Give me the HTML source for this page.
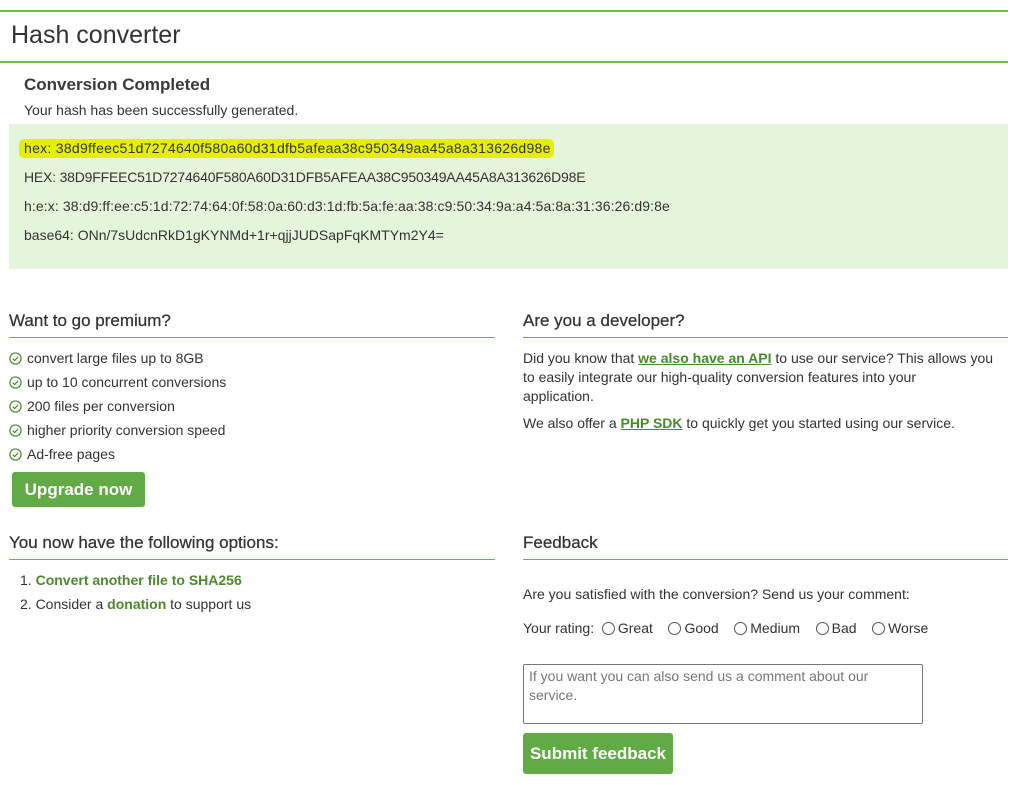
<!DOCTYPE html>
<html><head><meta charset="utf-8"><style>
*{margin:0;padding:0;box-sizing:border-box}
body{width:1017px;height:785px;background:#fff;font-family:"Liberation Sans",Arial,sans-serif;color:#333;font-size:14px;position:relative;overflow:hidden}
.a{position:absolute;white-space:nowrap}
.hr{position:absolute;height:1px;background:#6cb24a}
.h3{font-size:17px;color:#333;-webkit-text-stroke:0.25px #333}
a{color:#4b8a2b;font-weight:bold;text-decoration:none}
a.u{text-decoration:underline}
.btn{position:absolute;background:#60ab45;color:#fff;font-weight:bold;font-size:17px;border-radius:3px;text-align:center}
.chk{display:inline-block;width:13px;height:13px;vertical-align:-2px;margin-right:5px}
.rad{display:inline-block;width:13px;height:13px;border:1px solid #555;border-radius:50%;vertical-align:-2px;margin-right:3px}
</style></head><body>
<div class="hr" style="left:0;top:10px;width:1008px;height:2px;background:#6cbe45"></div>
<div class="a" style="left:11px;top:21px;font-size:25px;color:#333">Hash converter</div>
<div class="hr" style="left:0;top:61px;width:1008px;height:2px;background:#6cbe45"></div>
<div class="a h3" style="left:24px;top:75px;font-weight:bold;color:#3a3a3a;-webkit-text-stroke:0">Conversion Completed</div>
<div class="a" style="left:24px;top:102px">Your hash has been successfully generated.</div>
<div class="a" style="left:9px;top:124px;width:999px;height:145px;background:#e4f5dc"></div>
<div class="a" style="left:19px;top:139px;width:535px;height:19px;background:#e6ef00;border-radius:5px"></div>
<div class="a" style="left:24px;top:140px;letter-spacing:0.28px">hex: 38d9ffeec51d7274640f580a60d31dfb5afeaa38c950349aa45a8a313626d98e</div>
<div class="a" style="left:24px;top:169px;letter-spacing:-0.2px">HEX: 38D9FFEEC51D7274640F580A60D31DFB5AFEAA38C950349AA45A8A313626D98E</div>
<div class="a" style="left:24px;top:198px;letter-spacing:0.1px">h:e:x: 38:d9:ff:ee:c5:1d:72:74:64:0f:58:0a:60:d3:1d:fb:5a:fe:aa:38:c9:50:34:9a:a4:5a:8a:31:36:26:d9:8e</div>
<div class="a" style="left:24px;top:227px">base64: ONn/7sUdcnRkD1gKYNMd+1r+qjjJUDSapFqKMTYm2Y4=</div>

<div class="a h3" style="left:9px;top:311px">Want to go premium?</div>
<div class="hr" style="left:9px;top:337px;width:486px"></div>
<div class="a" style="left:9px;top:346px;line-height:24px">
<div><svg class="chk" viewBox="0 0 14 14"><circle cx="7" cy="7" r="6" fill="none" stroke="#4b8a2b" stroke-width="1.3"/><path d="M4 7.2l2 2 4-4" fill="none" stroke="#4b8a2b" stroke-width="1.3"/></svg>convert large files up to 8GB</div>
<div><svg class="chk" viewBox="0 0 14 14"><circle cx="7" cy="7" r="6" fill="none" stroke="#4b8a2b" stroke-width="1.3"/><path d="M4 7.2l2 2 4-4" fill="none" stroke="#4b8a2b" stroke-width="1.3"/></svg>up to 10 concurrent conversions</div>
<div><svg class="chk" viewBox="0 0 14 14"><circle cx="7" cy="7" r="6" fill="none" stroke="#4b8a2b" stroke-width="1.3"/><path d="M4 7.2l2 2 4-4" fill="none" stroke="#4b8a2b" stroke-width="1.3"/></svg>200 files per conversion</div>
<div><svg class="chk" viewBox="0 0 14 14"><circle cx="7" cy="7" r="6" fill="none" stroke="#4b8a2b" stroke-width="1.3"/><path d="M4 7.2l2 2 4-4" fill="none" stroke="#4b8a2b" stroke-width="1.3"/></svg>higher priority conversion speed</div>
<div><svg class="chk" viewBox="0 0 14 14"><circle cx="7" cy="7" r="6" fill="none" stroke="#4b8a2b" stroke-width="1.3"/><path d="M4 7.2l2 2 4-4" fill="none" stroke="#4b8a2b" stroke-width="1.3"/></svg>Ad-free pages</div>
</div>
<div class="btn" style="left:12px;top:472px;width:133px;height:35px;line-height:35px">Upgrade now</div>

<div class="a h3" style="left:9px;top:533px">You now have the following options:</div>
<div class="hr" style="left:9px;top:559px;width:486px"></div>
<div class="a" style="left:20px;top:568px;line-height:24px">
<div>1. <a>Convert another file to SHA256</a></div>
<div>2. Consider a <a>donation</a> to support us</div>
</div>

<div class="a h3" style="left:523px;top:311px">Are you a developer?</div>
<div class="hr" style="left:523px;top:337px;width:485px"></div>
<div class="a" style="left:523px;top:349px;line-height:19px">Did you know that <a class="u">we also have an API</a> to use our service? This allows you<br>to easily integrate our high-quality conversion features into your<br>application.</div>
<div class="a" style="left:523px;top:415px">We also offer a <a class="u">PHP SDK</a> to quickly get you started using our service.</div>

<div class="a h3" style="left:523px;top:533px">Feedback</div>
<div class="hr" style="left:523px;top:559px;width:485px"></div>
<div class="a" style="left:523px;top:586px">Are you satisfied with the conversion? Send us your comment:</div>
<div class="a" style="left:523px;top:620px">Your rating:&nbsp; <span class="rad"></span>Great&nbsp;&nbsp;&nbsp; <span class="rad"></span>Good&nbsp;&nbsp;&nbsp; <span class="rad"></span>Medium&nbsp;&nbsp;&nbsp; <span class="rad"></span>Bad&nbsp;&nbsp;&nbsp; <span class="rad"></span>Worse</div>
<div class="a" style="left:523px;top:664px;width:400px;height:60px;border:1px solid #777;border-radius:2px;padding:2px 5px;color:#777;white-space:normal;line-height:19px">If you want you can also send us a comment about our service.</div>
<div class="btn" style="left:523px;top:733px;width:150px;height:41px;line-height:41px">Submit feedback</div>
</body></html>
